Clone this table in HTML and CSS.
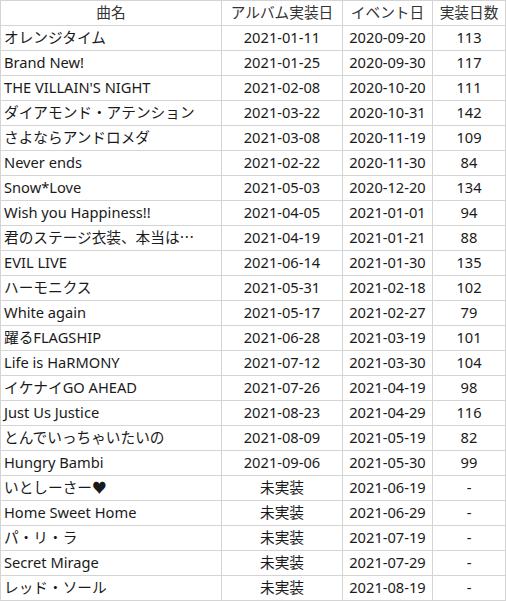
FILE: index.html
```html
<!DOCTYPE html>
<html lang="ja">
<head>
<meta charset="utf-8">
<link rel="stylesheet" href="styles.css">
</head>
<body>
<div class="sheet">
  <div class="cell head">曲名</div><div class="cell head">アルバム実装日</div><div class="cell head">イベント日</div><div class="cell head">実装日数</div>
  <div class="cell name">オレンジタイム</div><div class="cell c">2021-01-11</div><div class="cell c">2020-09-20</div><div class="cell c">113</div>
  <div class="cell name">Brand New!</div><div class="cell c">2021-01-25</div><div class="cell c">2020-09-30</div><div class="cell c">117</div>
  <div class="cell name">THE VILLAIN'S NIGHT</div><div class="cell c">2021-02-08</div><div class="cell c">2020-10-20</div><div class="cell c">111</div>
  <div class="cell name">ダイアモンド・アテンション</div><div class="cell c">2021-03-22</div><div class="cell c">2020-10-31</div><div class="cell c">142</div>
  <div class="cell name">さよならアンドロメダ</div><div class="cell c">2021-03-08</div><div class="cell c">2020-11-19</div><div class="cell c">109</div>
  <div class="cell name">Never ends</div><div class="cell c">2021-02-22</div><div class="cell c">2020-11-30</div><div class="cell c">84</div>
  <div class="cell name">Snow*Love</div><div class="cell c">2021-05-03</div><div class="cell c">2020-12-20</div><div class="cell c">134</div>
  <div class="cell name">Wish you Happiness!!</div><div class="cell c">2021-04-05</div><div class="cell c">2021-01-01</div><div class="cell c">94</div>
  <div class="cell name">君のステージ衣装、本当は<span class="cjk">…</span></div><div class="cell c">2021-04-19</div><div class="cell c">2021-01-21</div><div class="cell c">88</div>
  <div class="cell name">EVIL LIVE</div><div class="cell c">2021-06-14</div><div class="cell c">2021-01-30</div><div class="cell c">135</div>
  <div class="cell name">ハーモニクス</div><div class="cell c">2021-05-31</div><div class="cell c">2021-02-18</div><div class="cell c">102</div>
  <div class="cell name">White again</div><div class="cell c">2021-05-17</div><div class="cell c">2021-02-27</div><div class="cell c">79</div>
  <div class="cell name">躍るFLAGSHIP</div><div class="cell c">2021-06-28</div><div class="cell c">2021-03-19</div><div class="cell c">101</div>
  <div class="cell name">Life is HaRMONY</div><div class="cell c">2021-07-12</div><div class="cell c">2021-03-30</div><div class="cell c">104</div>
  <div class="cell name">イケナイGO AHEAD</div><div class="cell c">2021-07-26</div><div class="cell c">2021-04-19</div><div class="cell c">98</div>
  <div class="cell name">Just Us Justice</div><div class="cell c">2021-08-23</div><div class="cell c">2021-04-29</div><div class="cell c">116</div>
  <div class="cell name">とんでいっちゃいたいの</div><div class="cell c">2021-08-09</div><div class="cell c">2021-05-19</div><div class="cell c">82</div>
  <div class="cell name">Hungry Bambi</div><div class="cell c">2021-09-06</div><div class="cell c">2021-05-30</div><div class="cell c">99</div>
  <div class="cell name">いとしーさー♥</div><div class="cell c">未実装</div><div class="cell c">2021-06-19</div><div class="cell c">-</div>
  <div class="cell name">Home Sweet Home</div><div class="cell c">未実装</div><div class="cell c">2021-06-29</div><div class="cell c">-</div>
  <div class="cell name">パ・リ・ラ</div><div class="cell c">未実装</div><div class="cell c">2021-07-19</div><div class="cell c">-</div>
  <div class="cell name">Secret Mirage</div><div class="cell c">未実装</div><div class="cell c">2021-07-29</div><div class="cell c">-</div>
  <div class="cell name">レッド・ソール</div><div class="cell c">未実装</div><div class="cell c">2021-08-19</div><div class="cell c">-</div>
</div>
</body>
</html>
```
FILE: styles.css
```css
html, body {
  margin: 0;
  padding: 0;
  background: #ffffff;
}
.sheet {
  display: grid;
  grid-template-columns: 220px 120px 89px 72px;
  grid-auto-rows: 24px;
  gap: 1px;
  padding: 1px;
  width: 504px;
  background: #d4d4d4;
  font-family: "Noto Sans", "Noto Sans CJK JP", sans-serif;
  font-size: 14.67px;
  color: #1a1a1a;
}
.cell {
  background: #ffffff;
  display: flex;
  align-items: center;
  white-space: nowrap;
  overflow: hidden;
  line-height: 20px;
  padding-bottom: 2px;
}
.head {
  justify-content: center;
  color: #333333;
}
.name {
  padding-left: 3px;
}
.c {
  justify-content: center;
}
.cjk {
  font-family: "Noto Sans CJK JP", sans-serif;
}
```
